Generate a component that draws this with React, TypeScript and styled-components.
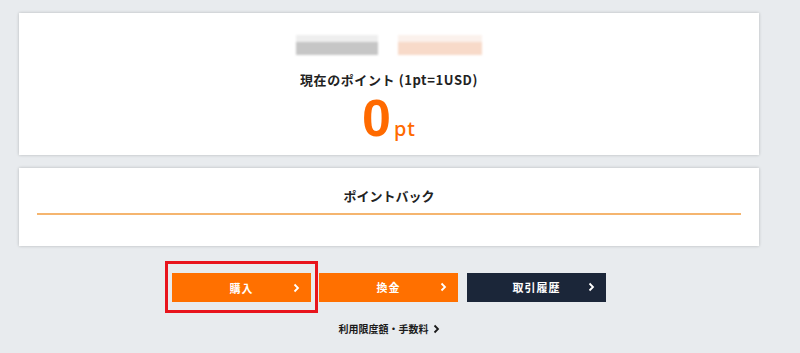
import React from "react";
import styled, { createGlobalStyle } from "styled-components";

const GlobalStyle = createGlobalStyle`
  html, body {
    margin: 0;
    padding: 0;
    background: #e8ebee;
    font-family: "Noto Sans CJK JP", "Noto Sans", sans-serif;
  }
`;

interface ActionButtonProps {
  label: string;
  tone: "orange" | "navy";
  highlighted?: boolean;
}

const buttons: ActionButtonProps[] = [
  { label: "購入", tone: "orange", highlighted: true },
  { label: "換金", tone: "orange" },
  { label: "取引履歴", tone: "navy" },
];

const Chevron = ({ color = "#fff" }: { color?: string }) => (
  <svg width="7" height="10" viewBox="0 0 7 10">
    <path d="M1.5 1.5 L5 5 L1.5 8.5" fill="none" stroke={color} strokeWidth="1.8" />
  </svg>
);

const ActionButton: React.FC<ActionButtonProps> = ({ label, tone, highlighted }) => {
  const button = (
    <Page__Button tone={tone}>
      <span>{label}</span>
      <Page__ButtonIcon>
        <Chevron />
      </Page__ButtonIcon>
    </Page__Button>
  );
  // 強調表示の赤枠
  return highlighted ? <Page__Highlight>{button}</Page__Highlight> : button;
};

const App: React.FC = () => {
  return (
    <Page__Container>
      <GlobalStyle />

      {/* 現在のポイント */}
      <Page__Card>
        <Page__Blurred>
          <Page__BlurBlock tone="gray" />
          <Page__BlurBlock tone="peach" />
        </Page__Blurred>
        <Page__Title>現在のポイント (1pt=1USD)</Page__Title>
        <Page__Points>
          0<Page__Unit>pt</Page__Unit>
        </Page__Points>
      </Page__Card>

      {/* ポイントバック */}
      <Page__BackCard>
        <Page__BackTitle>ポイントバック</Page__BackTitle>
      </Page__BackCard>

      <Page__Buttons>
        {buttons.map((b) => (
          <ActionButton key={b.label} {...b} />
        ))}
      </Page__Buttons>

      <Page__Link>
        利用限度額・手数料
        <Chevron color="#1a1a1a" />
      </Page__Link>
    </Page__Container>
  );
};

export default App;

/** Styled Components */
const Page__Container = styled.div`
  width: 800px;
  height: 353px;
  box-sizing: border-box;
  padding: 13px 41px 0 19px;
  display: flex;
  flex-direction: column;
  overflow: hidden;
`;

const Page__Card = styled.div`
  height: 142px;
  background: #fff;
  box-shadow: 0 0 3px rgba(0, 0, 0, 0.22);
  display: flex;
  flex-direction: column;
  align-items: center;
  padding-top: 22px;
  box-sizing: border-box;
`;

const Page__Blurred = styled.div`
  display: flex;
  gap: 20px;
  height: 20px;
`;

const Page__BlurBlock = styled.div<{ tone: "gray" | "peach" }>`
  width: ${(p) => (p.tone === "gray" ? "82px" : "84px")};
  height: 20px;
  background: ${(p) =>
    p.tone === "gray"
      ? "linear-gradient(180deg, #eeeeee 0 35%, #c6c6c6 35% 100%)"
      : "linear-gradient(180deg, #fbf1ec 0 35%, #f8dac9 35% 100%)"};
  filter: blur(1.2px);
`;

const Page__Title = styled.div`
  margin-top: 16px;
  font-size: 13px;
  font-weight: 700;
  letter-spacing: 0.6px;
  color: #222;
  line-height: 18px;
`;

const Page__Points = styled.div`
  margin-top: 9px;
  font-family: "Liberation Sans", Arial, sans-serif;
  font-size: 52px;
  font-weight: 700;
  line-height: 40px;
  color: #ff6a00;
`;

const Page__Unit = styled.span`
  font-family: "Noto Sans", sans-serif;
  font-size: 20px;
  font-weight: 500;
  margin-left: 3px;
  letter-spacing: 1px;
`;

const Page__BackCard = styled.div`
  margin-top: 13px;
  height: 78px;
  background: #fff;
  box-shadow: 0 0 3px rgba(0, 0, 0, 0.22);
  padding: 18px 18px 0;
  box-sizing: border-box;
`;

const Page__BackTitle = styled.div`
  text-align: center;
  font-size: 13px;
  font-weight: 700;
  color: #222;
  line-height: 20px;
  padding-bottom: 7px;
  border-bottom: 2px solid #f5b56f;
`;

const Page__Buttons = styled.div`
  margin-top: 15px;
  display: flex;
  justify-content: center;
  align-items: center;
  gap: 9px;
`;

const Page__Highlight = styled.div`
  border: 3px solid #e8141c;
  padding: 9px 4px 8px 4px;
  margin: 0 -8px 0 -7px;
`;

const Page__Button = styled.button<{ tone: "orange" | "navy" }>`
  position: relative;
  width: 139px;
  height: 29px;
  border: none;
  border-radius: 0;
  background: ${(p) => (p.tone === "orange" ? "#ff7000" : "#1b2639")};
  color: #fff;
  font-family: "Noto Sans CJK JP", sans-serif;
  font-size: 11px;
  font-weight: 700;
  letter-spacing: 1px;
  display: flex;
  align-items: center;
  justify-content: center;
  padding: 0;
  cursor: pointer;
`;

const Page__ButtonIcon = styled.span`
  position: absolute;
  right: 11px;
  top: 50%;
  transform: translateY(-50%);
  display: flex;
`;

const Page__Link = styled.div`
  margin-top: 8px;
  display: flex;
  justify-content: center;
  align-items: center;
  gap: 4px;
  font-size: 10px;
  font-weight: 700;
  color: #1a1a1a;
`;
